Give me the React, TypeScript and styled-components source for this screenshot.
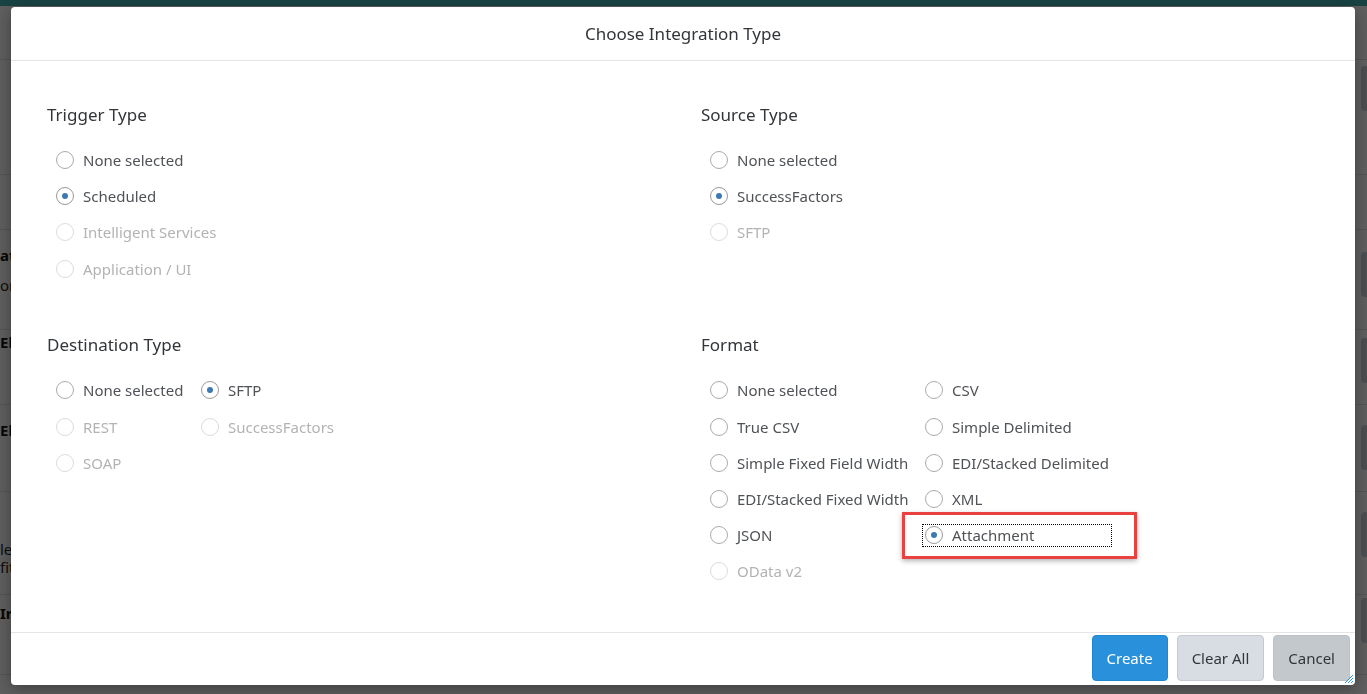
import React from 'react'
import styled, { createGlobalStyle } from 'styled-components'

const GlobalStyle = createGlobalStyle`
  html, body {
    margin: 0;
    height: 100%;
    overflow: hidden;
  }
  body {
    font-family: 'Noto Sans', 'Liberation Sans', sans-serif;
    background: #ebebeb;
  }
`

// page behind the dialog
const Page = styled.div`
  display: flex;
  flex-direction: column;
  height: 100vh;
  background: #ebebeb;
`
const ShellBar = styled.div`
  height: 6px;
  background: #3fa6a8;
  flex: none;
`
const PageRow = styled.div<{ h: number }>`
  height: ${({ h }) => h}px;
  flex: none;
  display: flex;
  justify-content: space-between;
  align-items: flex-start;
  border-bottom: 1px solid #cfcfcf;
  box-sizing: border-box;
`
const RowLabel = styled.div<{ top: number }>`
  padding-top: ${({ top }) => top}px;
  font-size: 15px;
  line-height: 18px;
  color: #222;
  b {
    display: block;
    font-weight: 700;
    color: #111;
  }
`
const RowButton = styled.div<{ top: number }>`
  margin-top: ${({ top }) => top}px;
  width: 56px;
  height: 45px;
  margin-right: -50px;
  background: #bcc2c8;
  border-radius: 4px;
`
const Overlay = styled.div`
  position: fixed;
  inset: 0;
  background: rgba(0, 0, 0, 0.6);
`

// dialog
const Dialog = styled.div`
  position: fixed;
  left: 11px;
  top: 7px;
  width: 1344px;
  height: 678px;
  background: #fff;
  border-radius: 4px;
  box-shadow: 0 4px 16px rgba(0, 0, 0, 0.35);
  display: flex;
  flex-direction: column;
  overflow: hidden;
  color: #32363a;
`
const Header = styled.div`
  height: 53px;
  flex: none;
  display: flex;
  align-items: center;
  justify-content: center;
  border-bottom: 1px solid #e5e5e5;
  font-size: 17px;
`
const Content = styled.div`
  flex: 1;
  display: grid;
  grid-template-columns: 1fr 1fr;
  row-gap: 46.5px;
  align-content: start;
  padding: 42px 0 0 36px;
`
const Section = styled.div`
  display: flex;
  flex-direction: column;
`
const SectionTitle = styled.div`
  font-size: 17px;
  line-height: 24px;
  margin-bottom: 15px;
  color: #32363a;
`
const OptionGrid = styled.div<{ cols: string }>`
  display: grid;
  grid-template-columns: ${({ cols }) => cols};
  grid-auto-rows: 36.2px;
  padding-left: 9px;
`
const Option = styled.label<{ disabled?: boolean; focused?: boolean }>`
  position: relative;
  align-self: center;
  display: flex;
  align-items: center;
  gap: 9px;
  height: 21px;
  font-size: 15px;
  white-space: nowrap;
  color: ${({ disabled }) => (disabled ? '#b3b3b3' : '#4f5256')};
  ${({ focused }) =>
    focused &&
    `
    margin-left: -2px;
    padding-left: 2px;
    width: 186px;
    outline: 1px dotted #000;
  `}
`
const Circle = styled.span<{ checked?: boolean; disabled?: boolean }>`
  width: 16px;
  height: 16px;
  flex: none;
  border-radius: 50%;
  border: 1px solid ${({ disabled, checked }) => (disabled ? '#dcdcdc' : checked ? '#9a9a9a' : '#ababab')};
  background: #fff;
  display: flex;
  align-items: center;
  justify-content: center;
  &::after {
    content: '';
    width: 6px;
    height: 6px;
    border-radius: 50%;
    background: ${({ checked }) => (checked ? '#3d79b3' : 'transparent')};
  }
`
const Highlight = styled.span`
  position: absolute;
  left: -21px;
  top: -13px;
  width: 235px;
  height: 47px;
  box-sizing: border-box;
  border: 3px solid #e8413f;
  box-shadow: 0 2px 5px rgba(0, 0, 0, 0.3);
  pointer-events: none;
`
const Footer = styled.div`
  height: 53px;
  flex: none;
  border-top: 1px solid #e5e5e5;
  display: flex;
  align-items: center;
  justify-content: flex-end;
  gap: 9px;
  padding: 0 5px 2px 0;
  box-sizing: border-box;
  position: relative;
`
const Button = styled.button<{ kind: 'primary' | 'light' | 'dark' }>`
  height: 46px;
  padding: 0 14px;
  border-radius: 4px;
  font-family: inherit;
  font-size: 15px;
  border: 1px solid
    ${({ kind }) => (kind === 'primary' ? '#1f87d2' : kind === 'light' ? '#c4cad0' : '#bcc1c6')};
  background: ${({ kind }) => (kind === 'primary' ? '#2990dc' : kind === 'light' ? '#d7dde3' : '#c3c8cd')};
  color: ${({ kind }) => (kind === 'primary' ? '#fff' : '#32363a')};
`
const Grip = styled.svg`
  position: absolute;
  right: 2px;
  bottom: 2px;
`

type Opt = { label: string; checked?: boolean; disabled?: boolean; focused?: boolean }

const RadioOption = ({ label, checked, disabled, focused }: Opt) => (
  <Option disabled={disabled} focused={focused}>
    <Circle checked={checked} disabled={disabled} />
    {label}
    {focused && <Highlight />}
  </Option>
)

const trigger: Opt[] = [
  { label: 'None selected' },
  { label: 'Scheduled', checked: true },
  { label: 'Intelligent Services', disabled: true },
  { label: 'Application / UI', disabled: true },
]
const source: Opt[] = [
  { label: 'None selected' },
  { label: 'SuccessFactors', checked: true },
  { label: 'SFTP', disabled: true },
]
const destination: Opt[] = [
  { label: 'None selected' },
  { label: 'SFTP', checked: true },
  { label: 'REST', disabled: true },
  { label: 'SuccessFactors', disabled: true },
  { label: 'SOAP', disabled: true },
]
const format: Opt[] = [
  { label: 'None selected' },
  { label: 'CSV' },
  { label: 'True CSV' },
  { label: 'Simple Delimited' },
  { label: 'Simple Fixed Field Width' },
  { label: 'EDI/Stacked Delimited' },
  { label: 'EDI/Stacked Fixed Width' },
  { label: 'XML' },
  { label: 'JSON' },
  { label: 'Attachment', checked: true, focused: true },
  { label: 'OData v2', disabled: true },
]

const sections = [
  { title: 'Trigger Type', cols: '1fr', items: trigger },
  { title: 'Source Type', cols: '1fr', items: source },
  { title: 'Destination Type', cols: '145px 1fr', items: destination },
  { title: 'Format', cols: '215px 1fr', items: format },
]

const bgRows = [
  { h: 54 },
  { h: 115, btn: 6 },
  { h: 55 },
  { h: 100, labelTop: 16, bold: 'at', text: 'on', btn: 22 },
  { h: 75, labelTop: 3, bold: 'El', btn: 8 },
  { h: 87, labelTop: 16, bold: 'El', btn: 20 },
  { h: 103, labelTop: 48, text: 'le', text2: 'fit', btn: 20 },
  { h: 80, labelTop: 9, bold: 'Ir', btn: 3 },
  { h: 30 },
]

export default function App() {
  return (
    <>
      <GlobalStyle />
      <Page>
        <ShellBar />
        {bgRows.map((r, i) => (
          <PageRow key={i} h={r.h}>
            <RowLabel top={r.labelTop ?? 0}>
              {r.bold && <b>{r.bold}</b>}
              {r.bold && r.text && <div style={{ height: 12 }} />}
              {r.text && <div>{r.text}</div>}
              {r.text2 && <div>{r.text2}</div>}
            </RowLabel>
            {r.btn !== undefined && <RowButton top={r.btn} />}
          </PageRow>
        ))}
      </Page>
      <Overlay />
      <Dialog>
        <Header>Choose Integration Type</Header>
        <Content>
          {sections.map((s) => (
            <Section key={s.title}>
              <SectionTitle>{s.title}</SectionTitle>
              <OptionGrid cols={s.cols}>
                {s.items.map((o) => (
                  <RadioOption key={o.label} {...o} />
                ))}
              </OptionGrid>
            </Section>
          ))}
        </Content>
        <Footer>
          <Button kind="primary">Create</Button>
          <Button kind="light">Clear All</Button>
          <Button kind="dark">Cancel</Button>
          <Grip width="9" height="9" viewBox="0 0 9 9">
            <path d="M9 1L1 9M9 4L4 9M9 7L7 9" stroke="#2f8fdc" strokeWidth="1" />
          </Grip>
        </Footer>
      </Dialog>
    </>
  )
}
